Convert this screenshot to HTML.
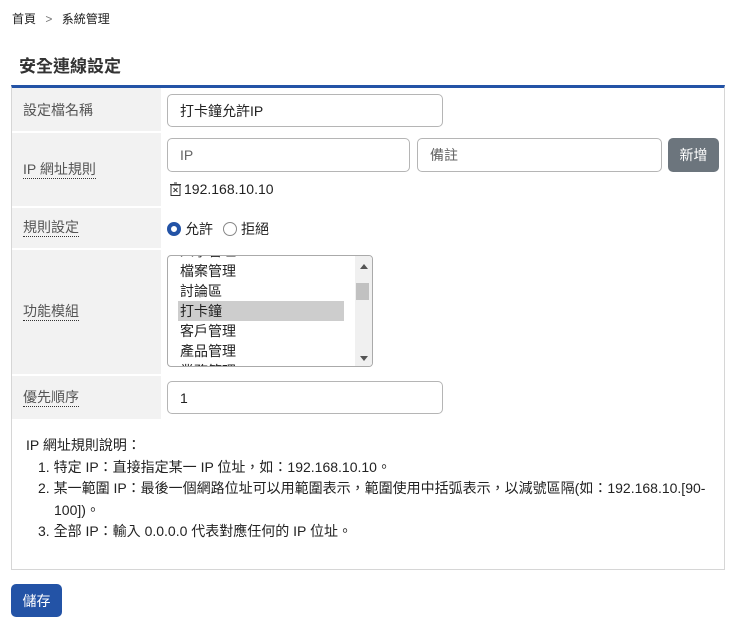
<!DOCTYPE html>
<html><head><meta charset="utf-8"><style>
*{box-sizing:border-box;margin:0;padding:0}
body{width:735px;height:626px;background:#fff;font-family:"Liberation Sans","Noto Sans CJK TC",sans-serif;color:#222;position:relative;overflow:hidden;font-size:14px}
.a{position:absolute}
.lbl{position:absolute;left:12px;width:149px;background:#f2f2f2;font-size:14px;color:#555;padding-left:11px;display:flex;align-items:center}
.lbl span.u{border-bottom:1px dotted #333;line-height:17px}
.inp{position:absolute;border:1px solid #b5b5b5;border-radius:5px;background:#fff;font-size:14px;padding-left:12px;display:flex;align-items:center}
.ph{color:#666}
</style></head><body>
<div class="a" style="left:12px;top:10px;font-size:12px;color:#222">首頁 <span style="color:#777;margin:0 6px">&gt;</span> 系統管理</div>
<div class="a" style="left:19px;top:52px;font-size:17px;font-weight:bold;color:#333">安全連線設定</div>
<div class="a" style="left:11px;top:85px;width:714px;height:485px;border:1px solid #d6d6d6;border-top:3px solid #2353a6"></div>

<div class="lbl" style="top:88px;height:43px">設定檔名稱</div>
<div class="lbl" style="top:133px;height:73px"><span class="u">IP 網址規則</span></div>
<div class="lbl" style="top:208px;height:40px"><span class="u">規則設定</span></div>
<div class="lbl" style="top:250px;height:124px"><span class="u">功能模組</span></div>
<div class="lbl" style="top:376px;height:43px"><span class="u">優先順序</span></div>

<div class="inp" style="left:167px;top:94px;width:276px;height:33px">打卡鐘允許IP</div>
<div class="inp ph" style="left:167px;top:138px;width:243px;height:34px">IP</div>
<div class="inp ph" style="left:417px;top:138px;width:245px;height:34px">備註</div>
<div class="a" style="left:668px;top:138px;width:51px;height:34px;background:#6c757d;border-radius:5px;color:#fff;font-size:14px;display:flex;align-items:center;justify-content:center">新增</div>
<div class="a" style="left:170px;top:181px;font-size:14px;display:flex;align-items:center">
<svg width="11" height="14" viewBox="0 0 11 14" style="margin-right:3px"><rect x="1" y="3" width="9" height="10.5" fill="none" stroke="#333"/><path d="M0 2.5h11M4 1h3" stroke="#333"/><path d="M3.5 6l4 4M7.5 6l-4 4" stroke="#333" stroke-width="1"/></svg>192.168.10.10</div>

<div class="a" style="left:167px;top:219px;display:flex;align-items:center;font-size:14px">
<span style="width:14px;height:14px;border-radius:50%;border:4px solid #2353a6;display:inline-block;margin-right:4px"></span>允許
<span style="width:14px;height:14px;border-radius:50%;border:1px solid #888;display:inline-block;margin:0 4px 0 10px"></span>拒絕</div>

<div class="a" style="left:167px;top:255px;width:206px;height:112px;border:1px solid #aaa;border-radius:4px;overflow:hidden;background:#fff">
<div class="a" style="left:12px;top:-15px;line-height:20px;font-size:14px">
<div>人事管理</div><div>檔案管理</div><div>討論區</div><div style="background:#cdcdcd;width:166px;margin-left:-2px;padding-left:2px">打卡鐘</div><div>客戶管理</div><div>產品管理</div><div>業務管理</div></div>
<div class="a" style="right:0;top:0;width:17px;height:110px;background:#f0f0f0"></div>
<div class="a" style="right:4px;top:8px;width:0;height:0;border:4px solid transparent;border-bottom:5px solid #555;border-top:0"></div>
<div class="a" style="right:3px;top:27px;width:13px;height:17px;background:#c1c1c1"></div>
<div class="a" style="right:4px;top:100px;width:0;height:0;border:4px solid transparent;border-top:5px solid #555;border-bottom:0"></div>
</div>

<div class="inp" style="left:167px;top:381px;width:276px;height:33px">1</div>

<div class="a" style="left:26px;top:435px;font-size:14px;line-height:21.5px;color:#222">
<div>IP 網址規則說明：</div>
<div style="padding-left:12px">1. 特定 IP：直接指定某一 IP 位址，如：192.168.10.10。</div>
<div style="padding-left:12px">2. 某一範圍 IP：最後一個網路位址可以用範圍表示，範圍使用中括弧表示，以減號區隔(如：192.168.10.[90-</div>
<div style="padding-left:28px">100])。</div>
<div style="padding-left:12px">3. 全部 IP：輸入 0.0.0.0 代表對應任何的 IP 位址。</div>
</div>

<div class="a" style="left:11px;top:584px;width:51px;height:33px;background:#2353a6;border-radius:5px;color:#fff;font-size:14px;display:flex;align-items:center;justify-content:center">儲存</div>
</body></html>
